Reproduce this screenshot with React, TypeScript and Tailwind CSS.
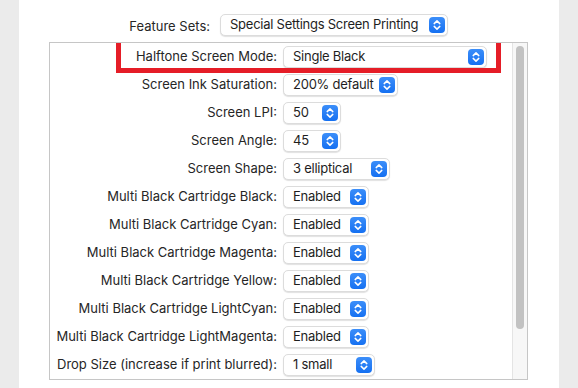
import React from "react";

const rows: { label: string; value: string; width: string; boxed?: boolean }[] = [
  { label: "Halftone Screen Mode:", value: "Single Black", width: "w-[204px]", boxed: true },
  { label: "Screen Ink Saturation:", value: "200% default", width: "w-[115px]" },
  { label: "Screen LPI:", value: "50", width: "w-[58px]" },
  { label: "Screen Angle:", value: "45", width: "w-[58px]" },
  { label: "Screen Shape:", value: "3 elliptical", width: "w-[107px]" },
  { label: "Multi Black Cartridge Black:", value: "Enabled", width: "w-[86px]" },
  { label: "Multi Black Cartridge Cyan:", value: "Enabled", width: "w-[86px]" },
  { label: "Multi Black Cartridge Magenta:", value: "Enabled", width: "w-[86px]" },
  { label: "Multi Black Cartridge Yellow:", value: "Enabled", width: "w-[86px]" },
  { label: "Multi Black Cartridge LightCyan:", value: "Enabled", width: "w-[86px]" },
  { label: "Multi Black Cartridge LightMagenta:", value: "Enabled", width: "w-[86px]" },
  { label: "Drop Size (increase if print blurred):", value: "1 small", width: "w-[92px]" },
];

function Stepper() {
  return (
    <span className="flex h-[16px] w-[16px] shrink-0 items-center justify-center rounded-[4px] bg-gradient-to-b from-[#3b8ef9] to-[#1470f1]">
      <svg width="16" height="16" viewBox="0 0 16 16" fill="none">
        <path d="M5.2 6.6 L8 3.9 L10.8 6.6" stroke="white" strokeWidth="1.5" strokeLinecap="round" strokeLinejoin="round" />
        <path d="M5.2 9.4 L8 12.1 L10.8 9.4" stroke="white" strokeWidth="1.5" strokeLinecap="round" strokeLinejoin="round" />
      </svg>
    </span>
  );
}

function PopUp({ value, width }: { value: string; width: string }) {
  return (
    <div
      className={`${width} flex h-[22px] items-center justify-between rounded-[5px] border border-[#dcdcdc] bg-white pl-[9px] pr-[2px] shadow-[0_1px_1px_rgba(0,0,0,0.12)]`}
    >
      <span className="whitespace-nowrap text-[13px] tracking-[-0.25px] text-[#1e1e1e]">{value}</span>
      <Stepper />
    </div>
  );
}

export default function App() {
  return (
    <div className="flex h-[388px] w-[578px] bg-[#ebebeb] font-['Inter',sans-serif] text-[13px] text-[#262626]">
      <div className="ml-[19px] flex h-full w-[540px] flex-col bg-white">
        {/* Feature sets selector */}
        <div className="flex h-[42px] items-start pl-[93px] pt-[14px]">
          <span className="mt-[3px] w-[98px] text-right">Feature Sets:</span>
          <div className="ml-[10px]">
            <PopUp value="Special Settings Screen Printing" width="w-[228px]" />
          </div>
        </div>

        {/* Settings list */}
        <div className="relative ml-[30px] flex h-[338px] w-[479px] border border-[#c6c6c6]">
          <div className="flex flex-1 flex-col overflow-hidden">
            {rows.map((r) => (
              <div key={r.label} className="relative flex h-[28px] shrink-0 items-center">
                <span className="w-[227px] shrink-0 whitespace-nowrap text-right">{r.label}</span>
                <div className="ml-[6px]">
                  <PopUp value={r.value} width={r.width} />
                </div>
                {r.boxed && (
                  <div className="absolute left-[66px] top-[-5px] h-[35px] w-[385px] border-[5px] border-[#e51d27]" />
                )}
              </div>
            ))}
          </div>
          <div className="flex w-[15px] shrink-0 justify-center border-l border-[#e4e4e4] bg-[#f7f7f7] pt-[3px]">
            <div className="h-[283px] w-[8px] rounded-full bg-[#c2c2c2]" />
          </div>
        </div>
      </div>
    </div>
  );
}
